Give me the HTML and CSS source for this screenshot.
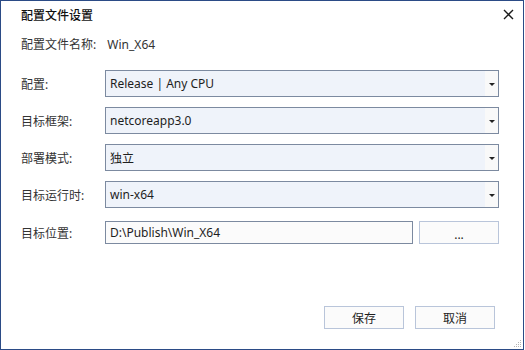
FILE: index.html
```html
<!DOCTYPE html>
<html lang="zh-CN">
<head>
  <meta charset="UTF-8">
  <meta name="viewport" content="width=device-width, initial-scale=1.0">
  <title>配置文件设置</title>
  <link rel="stylesheet" href="styles.css">
</head>
<body>

<!-- Dialog window -->
<div class="dialog">
  <div class="dialog-title">
    <span class="title-text">配置文件设置</span>
    <svg class="close-icon" width="11" height="11" viewBox="0 0 11 11">
      <path d="M1 1 L10 10 M10 1 L1 10" stroke="#1a1a1a" stroke-width="1.4" fill="none"/>
    </svg>
  </div>

  <div class="profile-name">
    <span class="profile-label">配置文件名称:</span>
    <span>Win_X64</span>
  </div>

  <div class="form">
    <label class="form-label">配置:</label>
    <div class="combo">
      <span class="combo-value">Release | Any CPU</span>
      <span class="combo-drop"><i class="arrow"></i></span>
    </div>

    <label class="form-label">目标框架:</label>
    <div class="combo">
      <span class="combo-value">netcoreapp3.0</span>
      <span class="combo-drop"><i class="arrow"></i></span>
    </div>

    <label class="form-label">部署模式:</label>
    <div class="combo">
      <span class="combo-value">独立</span>
      <span class="combo-drop"><i class="arrow"></i></span>
    </div>

    <label class="form-label">目标运行时:</label>
    <div class="combo">
      <span class="combo-value">win-x64</span>
      <span class="combo-drop"><i class="arrow"></i></span>
    </div>

    <label class="form-label path-label">目标位置:</label>
    <div class="path-row">
      <div class="textbox">D:\Publish\Win_X64</div>
      <button class="btn browse-btn">...</button>
    </div>
  </div>

  <div class="dialog-footer">
    <button class="btn footer-btn">保存</button>
    <button class="btn footer-btn">取消</button>
  </div>

  <!-- resize grip -->
  <svg class="grip" width="10" height="10" viewBox="0 0 10 10">
    <rect x="8" y="2" width="1" height="1" fill="#b5b5b5"/>
    <rect x="6" y="4" width="1" height="1" fill="#b5b5b5"/>
    <rect x="8" y="4" width="1" height="1" fill="#b5b5b5"/>
    <rect x="4" y="6" width="1" height="1" fill="#b5b5b5"/>
    <rect x="6" y="6" width="1" height="1" fill="#b5b5b5"/>
    <rect x="8" y="6" width="1" height="1" fill="#b5b5b5"/>
    <rect x="2" y="8" width="1" height="1" fill="#b5b5b5"/>
    <rect x="4" y="8" width="1" height="1" fill="#b5b5b5"/>
    <rect x="6" y="8" width="1" height="1" fill="#b5b5b5"/>
    <rect x="8" y="8" width="1" height="1" fill="#b5b5b5"/>
  </svg>
</div>

</body>
</html>
```

FILE: styles.css
```css
/* Dialog layout */
body {
  margin: 0;
  font-family: "Noto Sans", "Noto Sans CJK SC", sans-serif;
  font-size: 12px;
  color: #1e1e1e;
  background: #ffffff;
}

.dialog {
  position: relative;
  width: 524px;
  height: 350px;
  box-sizing: border-box;
  border: 1px solid #2b4b86;
  background: #ffffff;
  display: flex;
  flex-direction: column;
}

.dialog-title {
  height: 27px;
  display: flex;
  align-items: center;
  justify-content: space-between;
  padding: 0 9px 0 20px;
}

.title-text {
  font-size: 12px;
  font-weight: 500;
  color: #111;
}

.close-icon {
  display: block;
}

.profile-name {
  margin-top: 7px;
  height: 20px;
  line-height: 20px;
  padding-left: 20px;
  color: #333;
}

.profile-label {
  margin-right: 8px;
}

/* Form grid */
.form {
  margin-top: 15px;
  padding-left: 20px;
  display: grid;
  grid-template-columns: 84px 394px;
  row-gap: 10px;
}

.form-label {
  display: flex;
  align-items: center;
  color: #333;
}

.path-label {
  margin-top: 3px;
}

.combo {
  height: 27px;
  box-sizing: border-box;
  border: 1px solid #7c8aa0;
  background: #eff3fa;
  display: flex;
  align-items: center;
}

.combo-value {
  flex: 1;
  padding-left: 4px;
  color: #1e1e1e;
}

.combo-drop {
  width: 13px;
  height: 100%;
  background: #f9f9f9;
  display: flex;
  align-items: center;
  justify-content: center;
}

.arrow {
  width: 0;
  height: 0;
  border-left: 3px solid transparent;
  border-right: 3px solid transparent;
  border-top: 3px solid #222;
  margin-top: 2px;
}

.path-row {
  margin-top: 3px;
  display: flex;
  gap: 6px;
}

.textbox {
  width: 308px;
  height: 23px;
  box-sizing: border-box;
  border: 1px solid #7c8aa0;
  background: #fbfbfb;
  padding-left: 4px;
  line-height: 21px;
}

/* Buttons */
.btn {
  height: 23px;
  box-sizing: border-box;
  border: 1px solid #b9c5da;
  background: #fbfbfb;
  font-family: inherit;
  font-size: 12px;
  color: #1e1e1e;
  padding: 0;
}

.browse-btn {
  width: 80px;
  padding-top: 3px;
}

.dialog-footer {
  margin-top: auto;
  padding: 0 28px 20px 0;
  display: flex;
  justify-content: flex-end;
  gap: 11px;
}

.footer-btn {
  width: 80px;
}

.grip {
  position: absolute;
  right: 1px;
  bottom: 1px;
}
```
